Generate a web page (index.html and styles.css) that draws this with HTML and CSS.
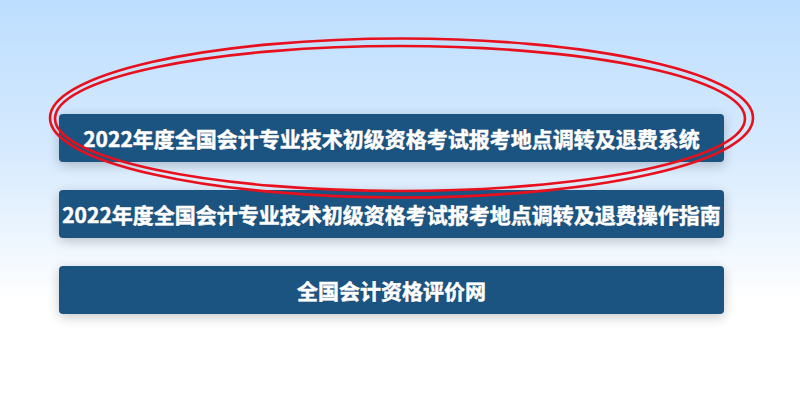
FILE: index.html
```html
<!DOCTYPE html>
<html lang="zh-CN">
<head>
<meta charset="utf-8">
<title>全国会计资格评价网</title>
<link rel="stylesheet" href="styles.css">
</head>
<body>
<div class="page">
  <div class="links">
    <a class="btn" href="#">2022年度全国会计专业技术初级资格考试报考地点调转及退费系统</a>
    <a class="btn" href="#">2022年度全国会计专业技术初级资格考试报考地点调转及退费操作指南</a>
    <a class="btn" href="#">全国会计资格评价网</a>
  </div>
  <svg class="circle" width="800" height="400" viewBox="0 0 800 400">
    <ellipse cx="401.5" cy="118" rx="351.5" ry="79.5" fill="none" stroke="#e8101c" stroke-width="2.6"/>
    <ellipse cx="400" cy="118.5" rx="345" ry="72.5" fill="none" stroke="#e8101c" stroke-width="2.6"/>
  </svg>
</div>
</body>
</html>
```

FILE: styles.css
```css
html, body {
  margin: 0;
  padding: 0;
}
body {
  width: 800px;
  height: 400px;
  overflow: hidden;
  background: linear-gradient(to bottom, #bddeff 0px, #d6eafe 150px, #eef6fe 240px, #ffffff 300px, #ffffff 400px);
  font-family: "Noto Sans CJK SC", "Noto Sans", sans-serif;
}
.page {
  position: relative;
  width: 800px;
  height: 400px;
}
.links {
  display: flex;
  flex-direction: column;
  gap: 28px;
  padding: 114px 0 0 59px;
  width: 665px;
}
.btn {
  display: flex;
  align-items: center;
  justify-content: center;
  height: 48px;
  background: #1b5381;
  border-radius: 4px;
  color: #ffffff;
  font-size: 21px;
  font-weight: bold;
  text-decoration: none;
  white-space: nowrap;
  box-shadow: 0 3px 12px rgba(0, 0, 0, 0.22);
  -webkit-text-stroke: 0.5px #ffffff;
  text-shadow: 0 0 1px rgba(0, 0, 0, 0.4);
}
.circle {
  position: absolute;
  left: 0;
  top: 0;
  pointer-events: none;
}
```
